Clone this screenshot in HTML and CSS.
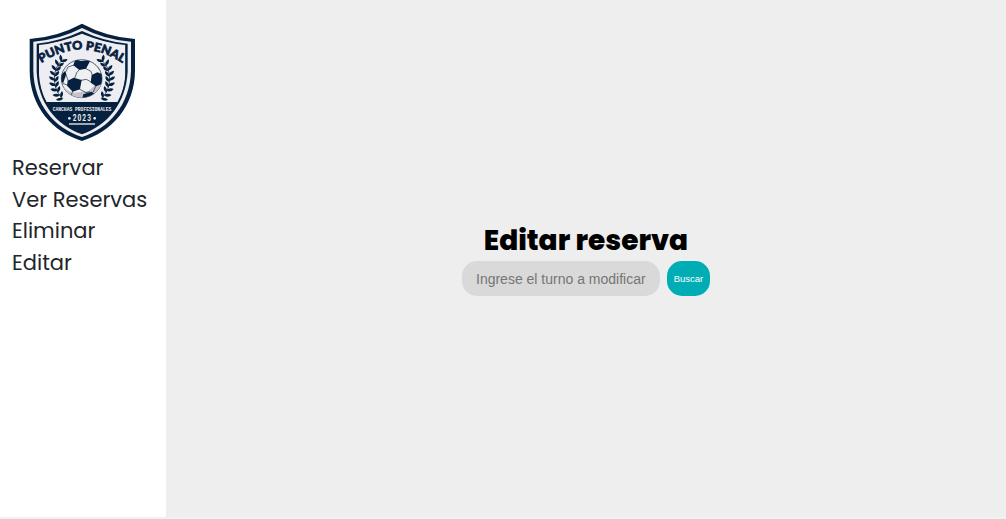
FILE: index.html
```html
<!DOCTYPE html>
<html lang="es">
<head>
<meta charset="utf-8">
<title>Punto Penal</title>
<link rel="stylesheet" href="styles.css">
</head>
<body>
<div class="app">
  <aside class="sidebar">
    <svg class="logo" viewBox="0 0 375 390" role="img" aria-label="Punto Penal">
      <defs>
        <path id="arc" d="M64 144Q187 62 312 148"/>
        <clipPath id="inside"><path d="M186 53Q122 83 55 88V172C58 260 110 325 186 354C262 325 314 260 317 172V88Q250 83 186 53Z"/></clipPath>
        <clipPath id="ball-edge"><ellipse cx="185" cy="191" rx="61" ry="57"/></clipPath>
        <path id="leaf" d="M2 1Q-14 1-16-13Q-2-12 2 1Z"/>
        <path id="leaf-in" d="M-1 1Q-1-12 12-16Q14-3-1 1Z"/>
        <g id="laurel" class="navy">
          <path class="stem" d="M130 134C98 153 92 217 127 249"/>
          <use href="#leaf" transform="translate(124 139) rotate(43)"/>
          <use href="#leaf-in" transform="translate(124 140) rotate(32)"/>
          <use href="#leaf" transform="translate(115 151) rotate(24)"/>
          <use href="#leaf-in" transform="translate(115 154) rotate(20)"/>
          <use href="#leaf" transform="translate(108 166) rotate(12)"/>
          <use href="#leaf-in" transform="translate(108 168) rotate(10)"/>
          <use href="#leaf" transform="translate(105 181) rotate(3)"/>
          <use href="#leaf-in" transform="translate(105 184)"/>
          <use href="#leaf" transform="translate(104 196) rotate(-6)"/>
          <use href="#leaf-in" transform="translate(105 200) rotate(-7)"/>
          <use href="#leaf" transform="translate(106 212) rotate(-14)"/>
          <use href="#leaf-in" transform="translate(107 216) rotate(-12)"/>
          <use href="#leaf" transform="translate(111 227) rotate(-24)"/>
          <use href="#leaf-in" transform="translate(113 232) rotate(-20)"/>
          <use href="#leaf" transform="translate(118 241) rotate(-37)"/>
          <use href="#leaf-in" transform="translate(123 248) rotate(-28)"/>
          <use href="#leaf" transform="translate(128 251) rotate(-48)"/>
        </g>
      </defs>
      <path class="navy" d="M186 26Q112 66 29 72V166C29 276 98 351 186 378C274 351 345 276 345 166V72Q260 66 186 26Z"/>
      <path class="pale" d="M186 39Q116 75 40 80V168C42 269 105 340 186 366C267 340 330 269 333 168V80Q256 75 186 39Z"/>
      <path class="navy" d="M186 48Q118 80 50 86V170C54 263 108 330 186 358C264 330 318 263 323 170V86Q254 80 186 48Z"/>
      <g clip-path="url(#inside)">
        <path class="pale" d="M186 56Q120 83 57 90V180Q60 225 80 262H292Q314 222 316 180V90Q252 83 186 56Z"/>
      </g>
      <text class="brand"><textPath href="#arc" textLength="260" lengthAdjust="spacingAndGlyphs">PUNTO PENAL</textPath></text>
      <use href="#laurel"/>
      <use href="#laurel" transform="translate(372 0) scale(-1 1)"/>
      <ellipse class="ball" cx="185" cy="191" rx="61" ry="57"/>
      <g clip-path="url(#ball-edge)">
        <path class="shade" d="M124 207Q148 239 177 232L206 228L228 207L249 202V250H124Z"/>
        <g class="navy">
          <path d="M166 133L182 138L212 135L198 161L178 165L160 151Z"/>
          <path d="M143 197L161 188L185 195L180 223L158 230L141 212Z"/>
          <path d="M215 180L232 172L249 178L246 207L228 214L212 203Z"/>
          <path d="M123 181L135 168L139 177L130 203L122 202Z"/>
          <path d="M190 238L215 230L225 238L204 250H187Z"/>
          <path d="M230 148L246 160L245 172L234 158Z"/>
        </g>
        <path class="seam" d="M162 150L144 156L136 173M137 177L145 198M178 164L170 173L164 190M196 160L213 169L217 181M183 196L199 193L215 202M178 222L198 233L210 230M228 212L219 232M158 228L154 240M144 211L128 205"/>
      </g>
      <g clip-path="url(#inside)"><path class="navy" d="M50 261H325V370H50Z"/></g>
      <text class="tagline" x="98" y="287" textLength="176" lengthAdjust="spacingAndGlyphs">CANCHAS PROFESIONALES</text>
      <text class="year" x="158" y="319" textLength="58" lengthAdjust="spacingAndGlyphs">2023</text>
      <g class="pale"><circle cx="148" cy="310" r="4"/><circle cx="224" cy="310" r="4"/><path d="M147 325H225V329H147Z"/></g>
    </svg>
    <nav class="menu">
      <a class="link">Reservar</a>
      <a class="link">Ver Reservas</a>
      <a class="link">Eliminar</a>
      <a class="link">Editar</a>
    </nav>
  </aside>
  <main class="content">
    <h1 class="title">Editar reserva</h1>
    <form class="search">
      <input class="field" type="text" placeholder="Ingrese el turno a modificar">
      <button class="button" type="button">Buscar</button>
    </form>
  </main>
</div>
</body>
</html>
```
FILE: styles.css
```css
* { box-sizing: border-box; }
body { margin: 0; height: 519px; background: #e8f5f5; overflow: hidden; }
.app { display: flex; height: 517px; }
.sidebar { width: 166px; background: #fff; flex: none; }
.logo { display: block; width: 125px; height: 130px; margin: 15px 0 0 20px; }
.navy { fill: #05213f; }
.pale { fill: #eeedf1; }
.ball { fill: #f0eff2; stroke: #05213f; stroke-width: 2; }
.shade { fill: #c6c2c7; }
.stem { fill: none; stroke: #05213f; stroke-width: 2.5; }
.seam { fill: none; stroke: #05213f; stroke-width: 2; }
.brand { fill: #05213f; stroke: #05213f; stroke-width: 2; font: 900 36px Lato, sans-serif; }
.tagline { fill: #eeedf1; font: 700 17px "Liberation Mono", monospace; }
.year { fill: #eeedf1; font: 700 25px Roboto, sans-serif; letter-spacing: 4px; }
.menu { display: flex; flex-direction: column; align-items: flex-start; padding: 7px 0 0 12px; }
.link {
  height: 31.6px;
  font: 400 21px/32px Poppins, Inter, sans-serif;
  color: #212529;
  white-space: nowrap;
}
.content {
  flex: 1;
  display: flex;
  flex-direction: column;
  align-items: center;
  padding-top: 219px;
  background: #eee;
}
.title { margin: 0; padding-top: 1px; height: 42px; font: 800 28px/42px Poppins, Inter, sans-serif; color: #000; white-space: nowrap; }
.search { display: flex; gap: 7px; }
.field {
  width: 198px;
  height: 35px;
  padding: 0 14px;
  border: 0;
  border-radius: 15px;
  background: #d9d9d9;
  font: 14px "Liberation Sans", Arial, sans-serif;
}
.field::placeholder { color: #757575; }
.button {
  width: 43px;
  height: 35px;
  padding: 0;
  border: 0;
  border-radius: 15px;
  background: #00adb5;
  color: #fff;
  font: 9.5px "Liberation Sans", Arial, sans-serif;
}
```
